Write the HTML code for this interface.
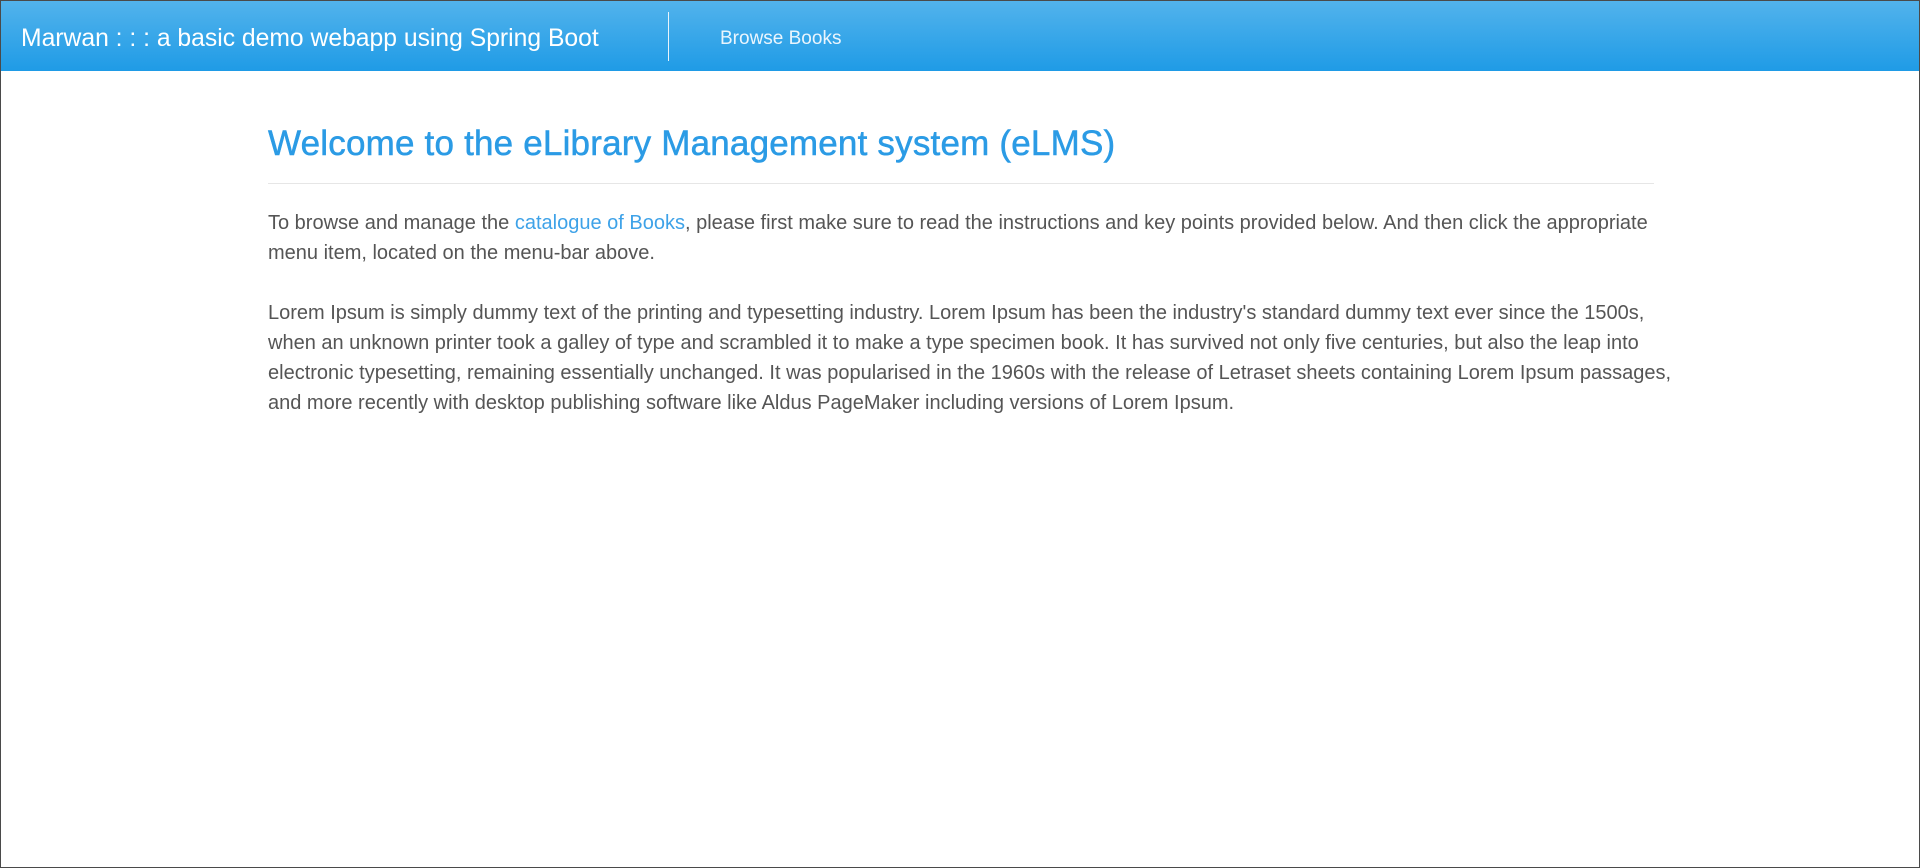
<!DOCTYPE html>
<html><head><meta charset="utf-8"><style>
html,body{margin:0;padding:0;}
body{width:1920px;height:868px;box-sizing:border-box;border:1px solid #4a4a4a;background:#fff;font-family:"Liberation Sans",sans-serif;position:relative;overflow:hidden;}
.nav{position:absolute;left:0;top:0;right:0;height:70px;background:linear-gradient(#52b3ec,#1f9be6);}
.brand{position:absolute;left:20px;top:24px;color:#fff;font-size:24.7px;white-space:nowrap;}
.div{position:absolute;left:667px;top:11px;width:1px;height:49px;background:#e8f4fc;}
.link{position:absolute;left:719px;top:27px;color:#eaf5fd;font-size:19px;}
h1{position:absolute;left:267px;top:123px;margin:0;font-size:35px;font-weight:normal;color:#2b9be5;white-space:nowrap;letter-spacing:0.2px;-webkit-text-stroke:0.5px #2b9be5;}
.hr{position:absolute;left:267px;top:182px;width:1386px;height:1px;background:#e6e6e6;}
.p{position:absolute;left:267px;font-size:20px;line-height:30px;color:#555;white-space:nowrap;}
a{color:#3ea2e8;text-decoration:none;}
</style></head><body>
<div class="nav"><div class="brand">Marwan : : : a basic demo webapp using Spring Boot</div><div class="div"></div><div class="link">Browse Books</div></div>
<h1>Welcome to the eLibrary Management system (eLMS)</h1>
<div class="hr"></div>
<div class="p" style="top:207px">To browse and manage the <a>catalogue of Books</a>, please first make sure to read the instructions and key points provided below. And then click the appropriate<br>menu item, located on the menu-bar above.</div>
<div class="p" style="top:297px">Lorem Ipsum is simply dummy text of the printing and typesetting industry. Lorem Ipsum has been the industry's standard dummy text ever since the 1500s,<br>when an unknown printer took a galley of type and scrambled it to make a type specimen book. It has survived not only five centuries, but also the leap into<br>electronic typesetting, remaining essentially unchanged. It was popularised in the 1960s with the release of Letraset sheets containing Lorem Ipsum passages,<br>and more recently with desktop publishing software like Aldus PageMaker including versions of Lorem Ipsum.</div>
</body></html>
